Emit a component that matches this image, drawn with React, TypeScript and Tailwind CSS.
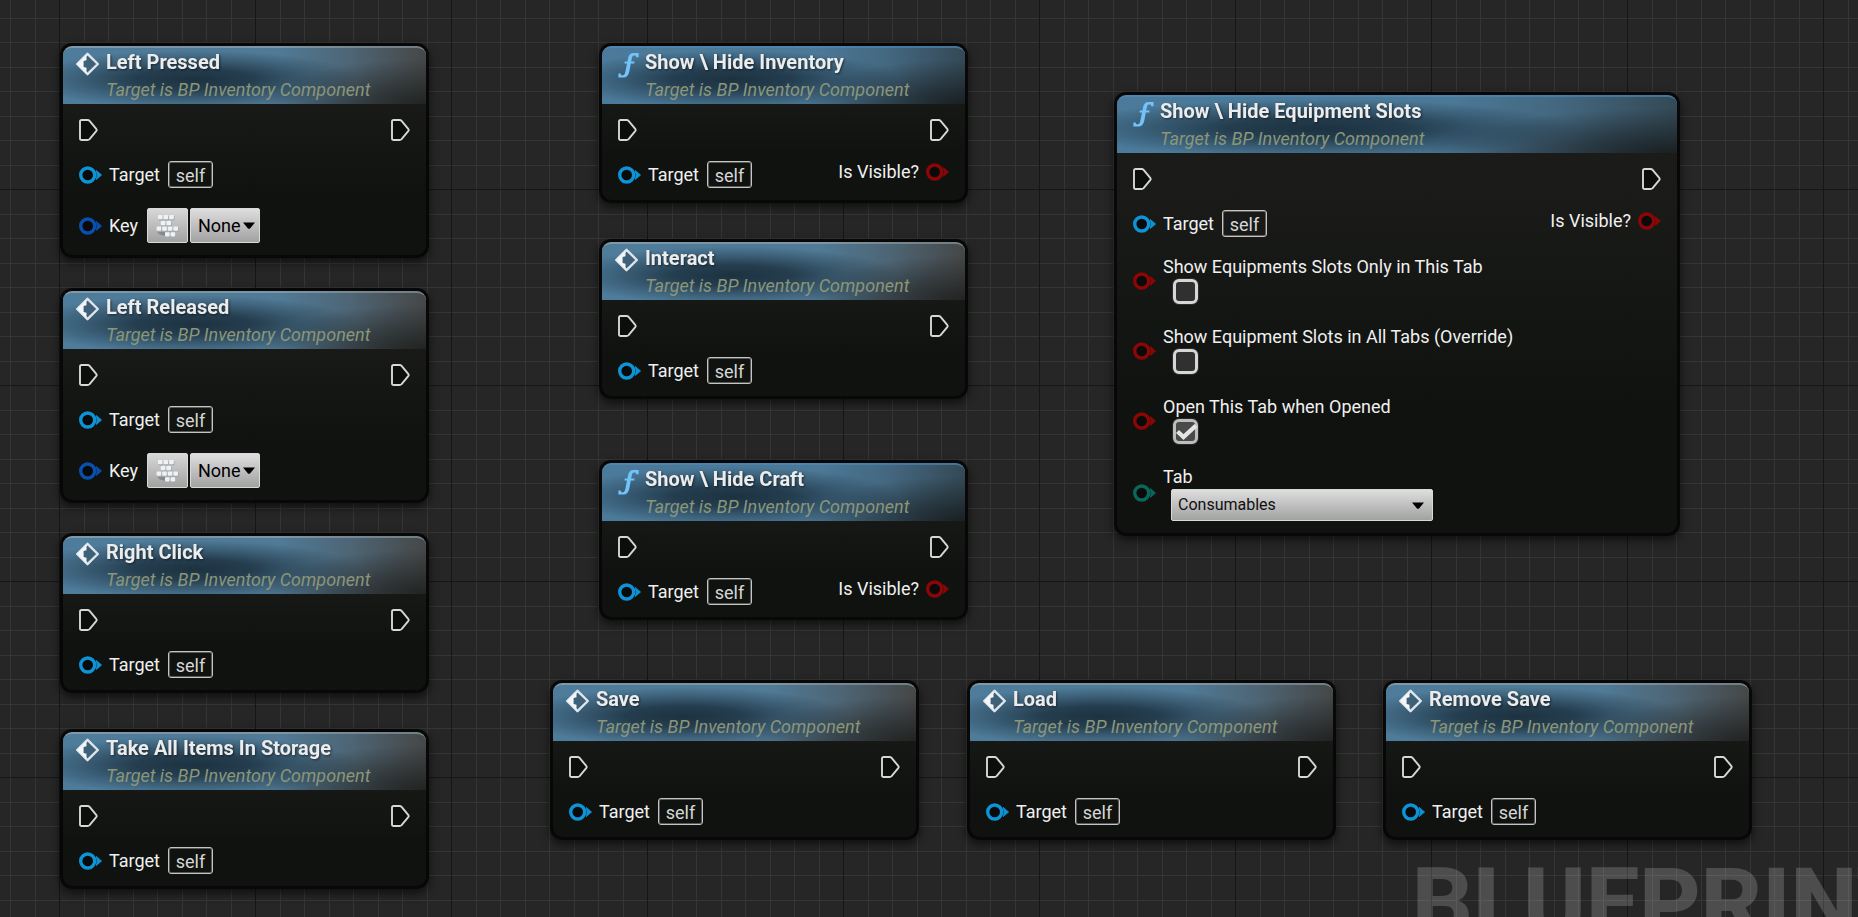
import { useId, type ReactNode } from "react";

const CYAN = "#0d93d6";
const BLUE = "#0a4fb0";
const RED = "#8c0606";
const TEAL = "#0b665c";

function ExecPin() {
  return (
    <svg className="h-[22px] w-[19px] shrink-0" viewBox="0 0 19 22" aria-hidden="true">
      <path
        d="M1 2.6Q1 1 2.6 1H8.6Q9.8 1 10.6 1.8L17.4 10.2Q18 11 17.4 11.8L10.6 20.2Q9.8 21 8.6 21H2.6Q1 21 1 19.4Z"
        fill="#0c0e0c"
        stroke="#d6d7d6"
        strokeWidth="1.9"
      />
    </svg>
  );
}

function DataPin({ color }: { color: string }) {
  return (
    <svg className="h-[18px] w-[23px] shrink-0" viewBox="0 0 23 18" aria-hidden="true">
      <path d="M17.3 4.4L22.6 9L17.3 13.6Q19 9 17.3 4.4Z" fill={color} stroke={color} strokeWidth="0.8" />
      <circle cx="8.7" cy="9" r="7" fill="#080b09" stroke={color} strokeWidth="3.4" />
    </svg>
  );
}

function EventIcon() {
  return (
    <svg className="h-6 w-6 shrink-0" viewBox="0 0 24 24" aria-hidden="true">
      <path d="M12.5 1.8L22.8 12L12.5 22.2L2.2 12Z" fill="#3f6079" stroke="#dfe6eb" strokeWidth="2.4" strokeLinejoin="round" />
      <path d="M11.5 2.8L2.2 12L11.5 21.2V15.8L8.6 15V9L11.5 8.2Z" fill="#f3f6f8" />
    </svg>
  );
}

function FunctionIcon() {
  return (
    <svg className="h-[26px] w-[25px] shrink-0" viewBox="0 0 25 26" aria-hidden="true">
      <path
        d="M24.6 1V5.2H22.4L21.6 3.6H19.6Q18.4 3.6 18 5.6L17.2 9.4H20.6L20.2 11.4H16.8L15.4 19Q14.2 25.6 9.4 25.6H4.4V21.4H6.6L7.4 23.2H9Q10.8 23.2 11.4 19.6L13 11.4H10.4L10.8 9.4H13.4L14.2 5.8Q15.2 1 19.4 1Z"
        fill="#74c3f8"
      />
    </svg>
  );
}

function KeyboardIcon() {
  const keys = [
    [2, 1],
    [7.6, 1],
    [13.2, 1],
    [4.8, 7],
    [10.4, 7],
    [0.6, 12.6],
    [6.2, 12.6],
    [11.8, 12.6],
    [17.4, 12.6],
    [9, 18.2],
    [14.6, 18.2],
  ];
  return (
    <svg className="h-6 w-6" viewBox="0 0 24 24" aria-hidden="true">
      <path d="M1 18.4L9 17.4V22L4 20.6Z" fill="#85888a" />
      {keys.map(([x, y]) => (
        <g key={`${x}-${y}`}>
          <rect x={x + 0.4} y={y + 1} width="5" height="4.4" rx="0.8" fill="#a3a8ad" />
          <rect x={x} y={y} width="4.6" height="4.2" rx="0.8" fill="#eff2f4" />
        </g>
      ))}
    </svg>
  );
}

function Caret() {
  return (
    <svg className="pointer-events-none h-[7px] w-3" viewBox="0 0 12 7" aria-hidden="true">
      <path d="M0 0.5H12L7 6.4Q6 7.2 5 6.4Z" fill="#000" />
    </svg>
  );
}

function TargetRow() {
  return (
    <div className="flex items-center">
      <DataPin color={CYAN} />
      <span className="ml-[7px]">Target</span>
      <button
        type="button"
        className="ml-2 h-[27px] w-[45px] rounded-[3px] border border-[#c4c5c4] text-[#d6d7d6] outline outline-[#c4c5c4]/40 -outline-offset-2"
      >
        self
      </button>
    </div>
  );
}

function KeyRow() {
  const id = useId();
  return (
    <div className="mt-5 flex items-center">
      <DataPin color={BLUE} />
      <label htmlFor={id} className="ml-[7px]">
        Key
      </label>
      <button
        type="button"
        aria-label="Listen for key"
        className="ml-[9px] flex h-[35px] w-[41px] items-center justify-center rounded-xs border border-[#d9d9d9] bg-linear-to-b from-[#d8d8d8] to-[#a2a2a2]"
      >
        <KeyboardIcon />
      </button>
      <div className="relative ml-[2px]">
        <select
          id={id}
          className="block h-[35px] w-[70px] appearance-none rounded-xs border border-[#d9d9d9] bg-linear-to-b from-[#dedede] to-[#a2a2a2] pl-[7px] text-black"
        >
          <option>None</option>
        </select>
        <span className="pointer-events-none absolute top-[14px] right-[5px] flex">
          <Caret />
        </span>
      </div>
    </div>
  );
}

function CheckRow({ label, checked = false }: { label: string; checked?: boolean }) {
  const id = useId();
  return (
    <div className="flex h-[70px] items-start">
      <div className="pt-[17px]">
        <DataPin color={RED} />
      </div>
      <div className="ml-[7px] flex flex-col">
        <label htmlFor={id} className="h-6 leading-6">
          {label}
        </label>
        <span className="relative ml-[10px] flex size-[25px]">
          <input
            id={id}
            type="checkbox"
            defaultChecked={checked}
            className="peer size-[25px] appearance-none rounded-md border-[3px] border-[#d6d6d6] bg-[#303030] ring-1 ring-white/10 checked:border-[#bdbdbd] checked:bg-[#4a4a4a]"
          />
          <svg
            className="pointer-events-none absolute inset-0 hidden size-[25px] peer-checked:block"
            viewBox="0 0 25 25"
            aria-hidden="true"
          >
            <path d="M4.5 12.5L10.5 18L23 6.5" fill="none" stroke="#e4e4e4" strokeWidth="4.4" />
          </svg>
        </span>
      </div>
    </div>
  );
}

function TabRow() {
  const id = useId();
  return (
    <div className="flex items-start">
      <div className="pt-[19px]">
        <DataPin color={TEAL} />
      </div>
      <div className="ml-[7px] flex flex-col">
        <label htmlFor={id} className="h-6 leading-6">
          Tab
        </label>
        <div className="relative ml-2">
          <select
            id={id}
            className="block h-8 w-[262px] appearance-none rounded-xs border border-[#d9d9d9] bg-linear-to-b from-[#dedede] to-[#a2a2a2] pl-[6px] text-base text-[#111]"
            defaultValue="Consumables"
          >
            <option>Consumables</option>
          </select>
          <span className="pointer-events-none absolute top-[13px] right-[9px] flex">
            <Caret />
          </span>
        </div>
      </div>
    </div>
  );
}

type NodeProps = {
  title: string;
  place: string;
  kind?: "event" | "function";
  width?: string;
  outputs?: boolean;
  children?: ReactNode;
};

function BlueprintNode({ title, place, kind = "event", width = "w-[369px]", outputs = false, children }: NodeProps) {
  const isEvent = kind === "event";
  return (
    <section
      className={`absolute ${place} ${width} rounded-xl border-[3px] border-[#060706]/90 bg-linear-to-b from-[#1a1b19]/95 from-20% to-[#0e110e]/95 to-70% shadow-[0_4px_10px_rgba(0,0,0,0.6)]`}
    >
      <header
        className={`flex h-[58px] rounded-t-[9px] border-t-2 pl-3 ${
          isEvent
            ? "border-[#93a5b1]/70 bg-[radial-gradient(ellipse_46%_52%_at_36%_56%,rgba(26,46,60,0.95),rgba(26,46,60,0.8)_35%,rgba(26,46,60,0.35)_70%,transparent),radial-gradient(ellipse_45%_80%_at_100%_100%,rgba(32,34,33,0.95),transparent),linear-gradient(90deg,#4e7c9b,#507a96_60%,#4d6473_80%,#454747)]"
            : "border-[#4f8ab5]/80 bg-[radial-gradient(ellipse_46%_52%_at_36%_56%,rgba(26,46,60,0.95),rgba(26,46,60,0.8)_35%,rgba(26,46,60,0.35)_70%,transparent),radial-gradient(ellipse_45%_80%_at_100%_100%,rgba(24,30,33,0.95),transparent),linear-gradient(90deg,#4b7a9a,#4b7896_60%,#43667e_80%,#344955)]"
        }`}
      >
        <div className="pt-1">{isEvent ? <EventIcon /> : <FunctionIcon />}</div>
        <div className={`whitespace-nowrap ${isEvent ? "ml-[7px]" : "ml-[6px]"}`}>
          <h2 className="text-xl leading-7 font-bold text-[#ececec] drop-shadow-[1px_1px_1px_rgba(0,0,0,0.5)]">{title}</h2>
          <p className="text-lg leading-7 text-[#8b9679] italic">Target is BP Inventory Component</p>
        </div>
      </header>
      <div className="px-4 pt-[15px] pb-3">
        <div className="flex justify-between">
          <ExecPin />
          <ExecPin />
        </div>
        <div className="mt-5 flex items-start justify-between">
          <TargetRow />
          {outputs && (
            <div className="flex items-center leading-[22px]">
              <span>Is Visible?</span>
              <span className="ml-[7px] flex">
                <DataPin color={RED} />
              </span>
            </div>
          )}
        </div>
        {children}
      </div>
    </section>
  );
}

function Grid() {
  return (
    <svg className="absolute inset-0 h-full w-full" aria-hidden="true">
      <defs>
        <pattern id="minor" width="49" height="49" patternUnits="userSpaceOnUse">
          <path d="M10 0h1v49h-1zM35 0h1v49h-1zM0 18h49v1H0zM0 42h49v1H0z" fill="#353535" />
        </pattern>
        <pattern id="major" width="196" height="196" patternUnits="userSpaceOnUse">
          <path d="M59 0h1v196h-1zM0 189h196v1H0z" fill="#161616" />
        </pattern>
      </defs>
      <rect width="100%" height="100%" fill="#262626" />
      <rect width="100%" height="100%" fill="url(#minor)" />
      <rect width="100%" height="100%" fill="url(#major)" />
    </svg>
  );
}

export default function App() {
  return (
    <main className="relative h-screen w-full overflow-hidden bg-[#262626] font-['Roboto',sans-serif] text-lg leading-[27px] text-[#f0f0f0]">
      <Grid />
      <div className="absolute top-[843px] left-[1412px] text-[95px] leading-[120px] font-extrabold whitespace-nowrap text-white/18">
        BLUEPRINT
      </div>

      <BlueprintNode title="Left Pressed" place="left-[60px] top-[43px]">
        <KeyRow />
      </BlueprintNode>
      <BlueprintNode title="Left Released" place="left-[60px] top-[288px]">
        <KeyRow />
      </BlueprintNode>
      <BlueprintNode title="Right Click" place="left-[60px] top-[533px]" />
      <BlueprintNode title="Take All Items In Storage" place="left-[60px] top-[729px]" />

      <BlueprintNode title="Show \ Hide Inventory" kind="function" outputs place="left-[599px] top-[43px]" />
      <BlueprintNode title="Interact" place="left-[599px] top-[239px]" />
      <BlueprintNode title="Show \ Hide Craft" kind="function" outputs place="left-[599px] top-[460px]" />

      <BlueprintNode title="Save" place="left-[550px] top-[680px]" />
      <BlueprintNode title="Load" place="left-[967px] top-[680px]" />
      <BlueprintNode title="Remove Save" place="left-[1383px] top-[680px]" />

      <BlueprintNode
        title="Show \ Hide Equipment Slots"
        kind="function"
        outputs
        width="w-[566px]"
        place="left-[1114px] top-[92px]"
      >
        <div className="mt-[18px]">
          <CheckRow label="Show Equipments Slots Only in This Tab" />
          <CheckRow label="Show Equipment Slots in All Tabs (Override)" />
          <CheckRow label="Open This Tab when Opened" checked />
          <TabRow />
        </div>
      </BlueprintNode>
    </main>
  );
}
